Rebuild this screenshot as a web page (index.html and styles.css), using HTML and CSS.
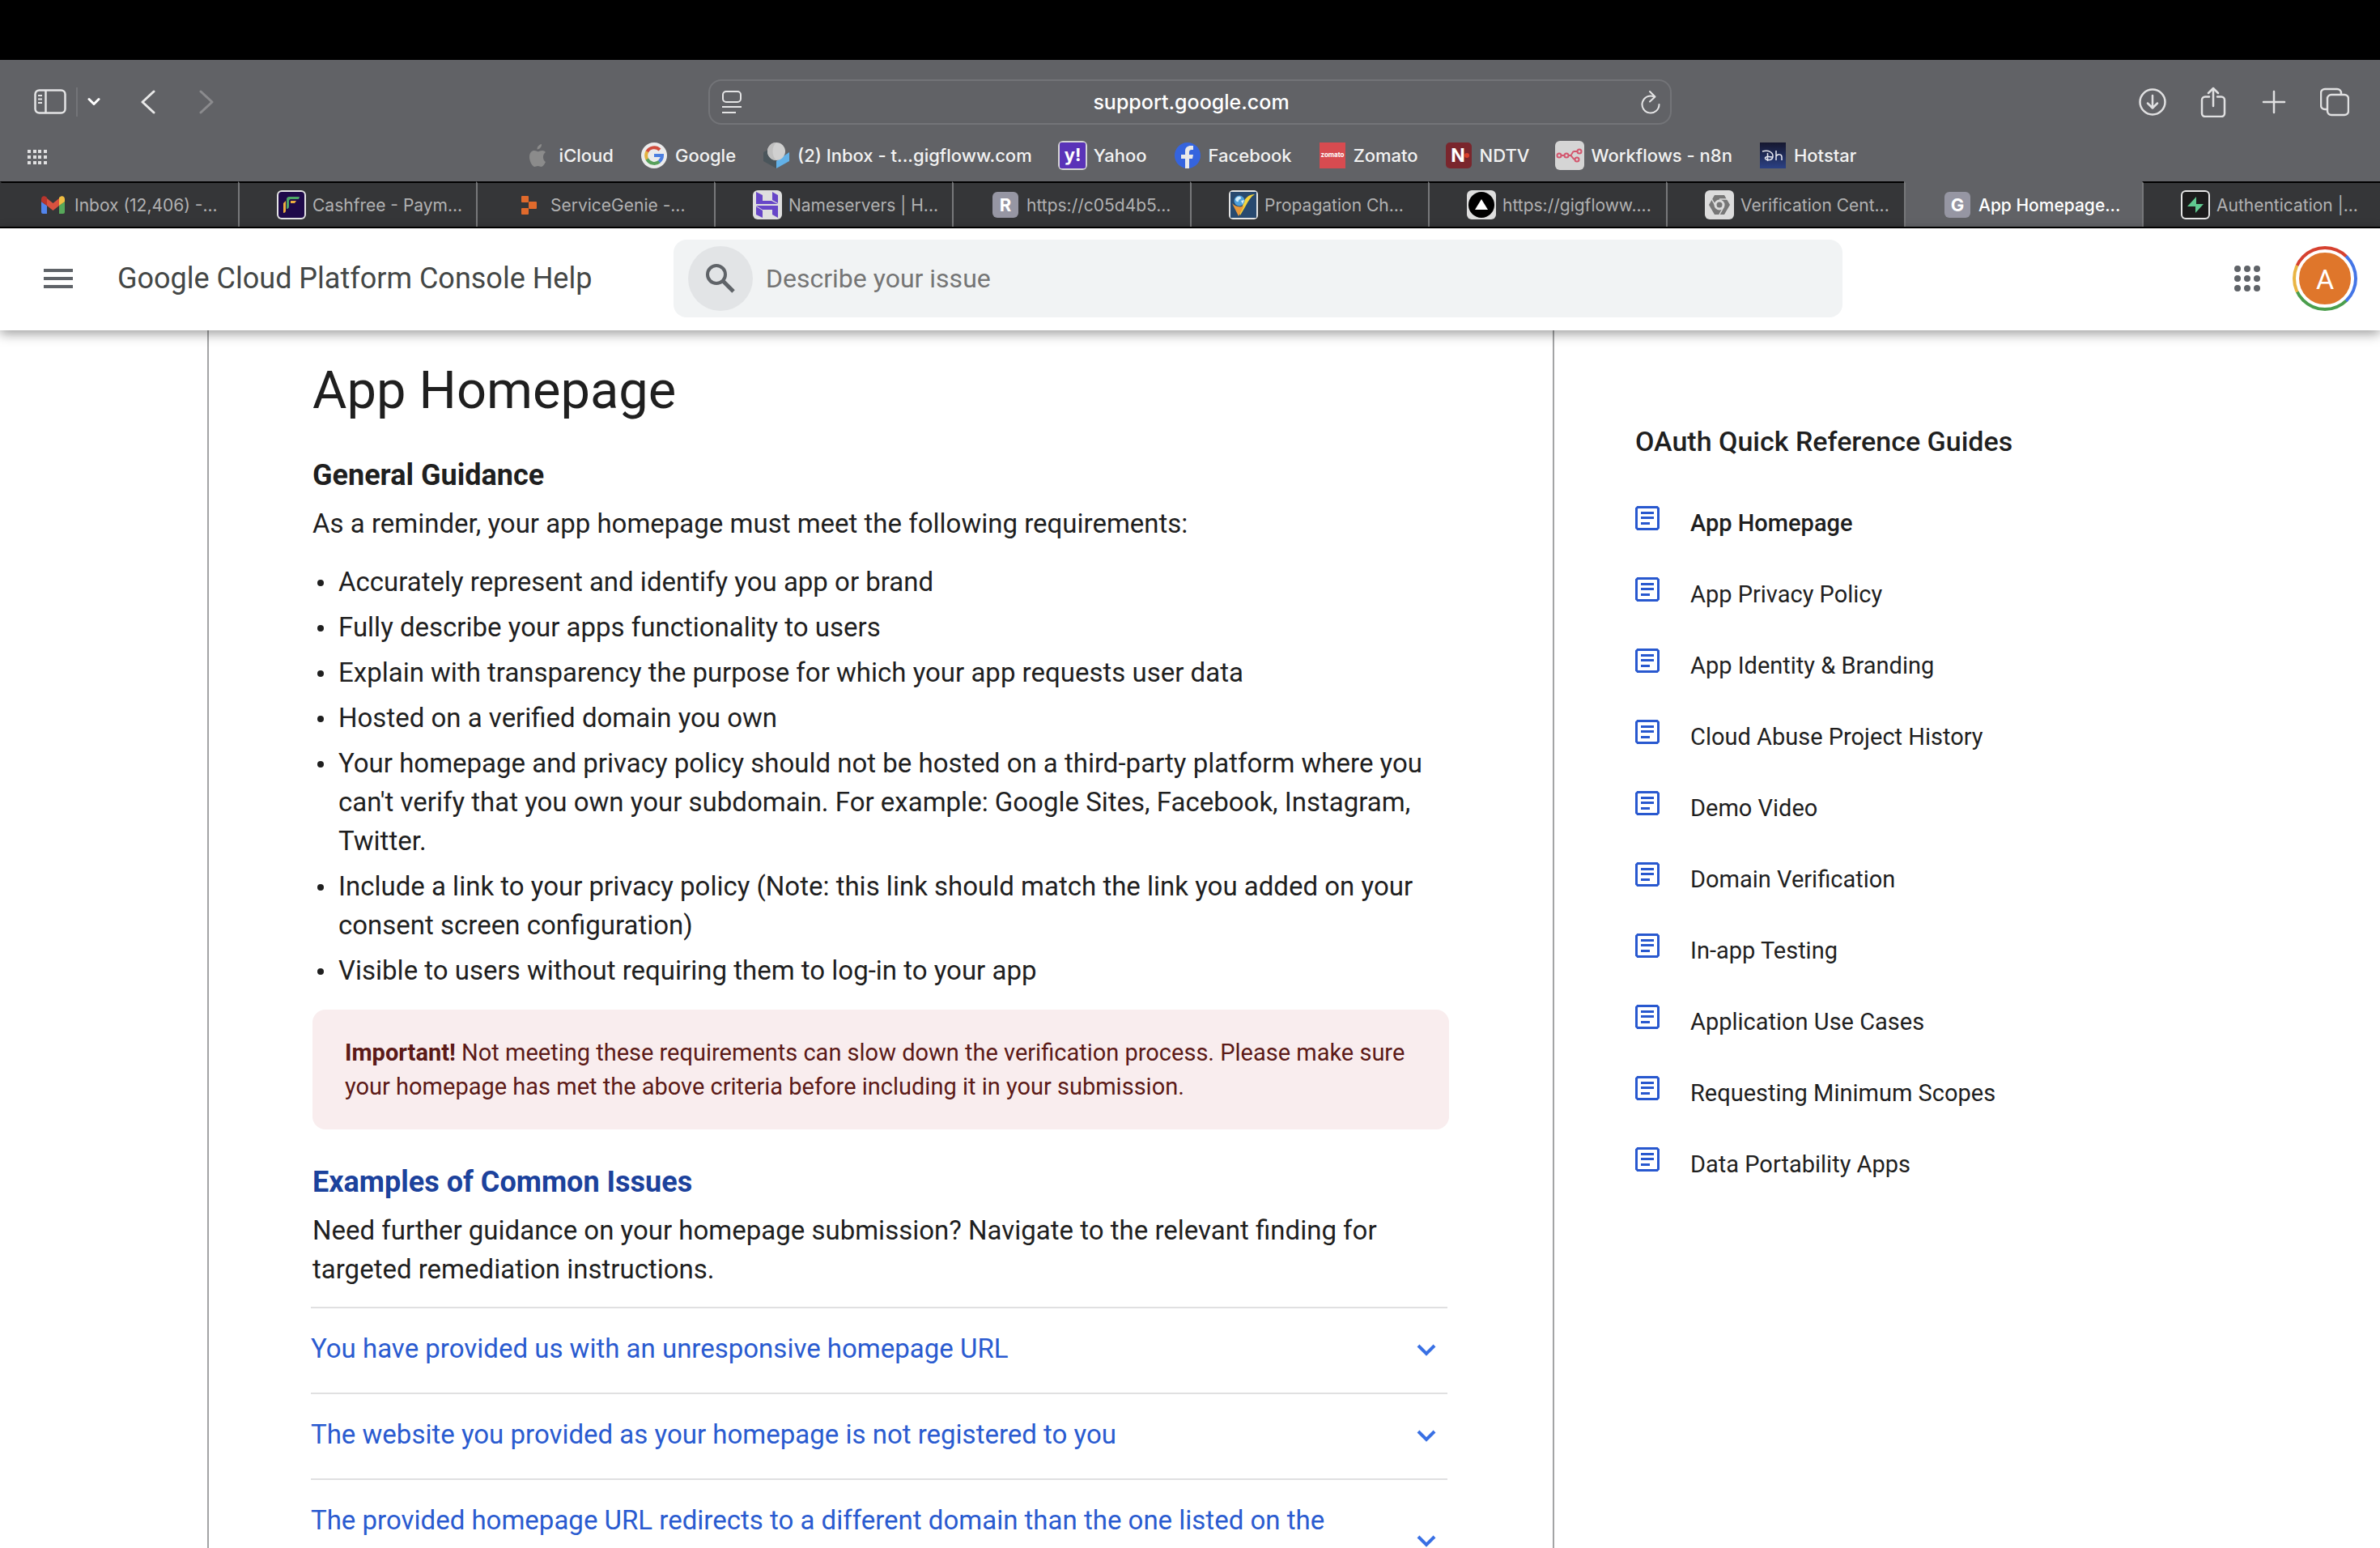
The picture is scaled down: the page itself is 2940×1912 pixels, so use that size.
FILE: index.html
```html
<!DOCTYPE html>
<html lang="en">
<head>
<meta charset="utf-8">
<title>App Homepage - Google Cloud Platform Console Help</title>
<link rel="stylesheet" href="styles.css">
</head>
<body>
<div class="notch-bar"></div>
<div class="browser">
  <div class="toolbar">
    <div class="tool-group tool-left">
      <button class="tool sidebar-btn" aria-label="Show sidebar">
        <svg width="40" height="32" viewBox="0 0 40 32" fill="none" stroke="#e4e4e5" stroke-width="2.500"><rect x="1.500" y="1.500" width="37" height="28" rx="5"/><path d="M14.500 2v27"/><path d="M5 8h5M5 12.500h5M5 17h5" stroke-width="2"/></svg>
      </button>
      <span class="tool-divider"></span>
      <button class="tool menu-btn" aria-label="Tab groups">
        <svg width="16" height="12" viewBox="0 0 16 12" fill="none" stroke="#fff" stroke-width="3" stroke-linecap="round" stroke-linejoin="round"><path d="M2 2.500 8 8.500l6-6"/></svg>
      </button>
      <button class="tool back-btn" aria-label="Back">
        <svg width="18" height="30" viewBox="0 0 18 30" fill="none" stroke="#e8e8e8" stroke-width="3" stroke-linecap="round" stroke-linejoin="round"><path d="M16 2 2 15l14 13"/></svg>
      </button>
      <button class="tool forward-btn" aria-label="Forward" disabled>
        <svg width="18" height="30" viewBox="0 0 18 30" fill="none" stroke="#8b8b8e" stroke-width="3" stroke-linecap="round" stroke-linejoin="round"><path d="m2 2 14 13L2 28"/></svg>
      </button>
    </div>
    <div class="address">
      <button class="tool" aria-label="Page settings">
        <svg width="24" height="30" viewBox="0 0 24 30" fill="none" stroke="#e4e4e5" stroke-width="2"><rect x="1" y="2" width="22" height="13" rx="4"/><path d="M0 21h24M0 28h17"/></svg>
      </button>
      <input class="address-input" type="text" aria-label="Address" value="support.google.com">
      <button class="tool" aria-label="Reload">
        <svg width="24" height="30" viewBox="0 0 24 30" fill="none" stroke="#e4e4e5" stroke-width="2" stroke-linecap="round" stroke-linejoin="round"><path d="M16.500 8.500A10.500 10.500 0 1 0 22.500 18"/><path d="m11 2 6.500 6.500-6.500 6"/></svg>
      </button>
    </div>
    <div class="tool-group tool-right">
      <button class="tool" aria-label="Downloads">
        <svg width="36" height="38" viewBox="0 0 36 38" fill="none" stroke="#e0e0e1" stroke-width="2.500" stroke-linecap="round" stroke-linejoin="round"><circle cx="18" cy="19" r="15.500"/><path d="M18 11v15M12 20.500l6 6 6-6"/></svg>
      </button>
      <button class="tool" aria-label="Share">
        <svg width="36" height="38" viewBox="0 0 36 38" fill="none" stroke="#e0e0e1" stroke-width="2.500" stroke-linecap="round" stroke-linejoin="round"><path d="M13 12.500H8a4 4 0 0 0-4 4V33a4 4 0 0 0 4 4h20a4 4 0 0 0 4-4V16.500a4 4 0 0 0-4-4h-5M18 24V2M12 8l6-6 6 6"/></svg>
      </button>
      <button class="tool" aria-label="New tab">
        <svg width="36" height="38" viewBox="0 0 36 38" fill="none" stroke="#e0e0e1" stroke-width="2.500" stroke-linecap="round"><path d="M18 6v26M5 19h26"/></svg>
      </button>
      <button class="tool" aria-label="Tab overview">
        <svg width="36" height="38" viewBox="0 0 36 38" fill="none" stroke="#e0e0e1" stroke-width="2.500" stroke-linejoin="round"><rect x="9" y="10" width="26" height="25" rx="5"/><path d="M9 28H6a5 5 0 0 1-5-5V8a5 5 0 0 1 5-5h15a5 5 0 0 1 5 5v2"/></svg>
      </button>
    </div>
  </div>

  <nav class="bookmarks" aria-label="Favourites">
    <button class="tool bookmarks-grid" aria-label="All favourites">
      <svg width="24" height="18" viewBox="0 0 24 18" fill="#e0e0e1"><path d="M0 0h4v4H0zM7 0h4v4H7zM13 0h4v4h-4zM20 0h4v4h-4zM0 7h4v4H0zM7 7h4v4H7zM13 7h4v4h-4zM20 7h4v4h-4zM0 14h4v4H0zM7 14h4v4H7zM13 14h4v4h-4zM20 14h4v4h-4z"/></svg>
    </button>
    <a class="bookmark" href="#"><svg class="favicon" viewBox="0 0 36 36"><path fill="#8b8b8b" d="M20 9c-1 1-3 1.600-3.500 1.500C16.500 7 19 4.800 22 4c.2 2-.6 3.800-2 5zM27 26c-1.500 3-3.500 6-5.500 6-1.700 0-2-1-4-1s-2.600 1-4 1c-3 0-6.500-7-6.500-12 0-5.500 3-8 6-8 2 0 3.500 1.200 4.700 1.200S20.500 12 23 12c1.600 0 3 .8 4 2-4.500 3-3.500 10 0 12z"/></svg><span>iCloud</span></a>
    <a class="bookmark" href="#"><svg class="favicon" viewBox="0 0 36 36" fill="none" stroke-width="4"><circle cx="18" cy="18" r="16" fill="#ececec"/><path stroke="#d04b3c" d="M9.300 13.500A10 10 0 0 1 25 11"/><path stroke="#e3b23f" d="M9.400 13.300a10 10 0 0 0 0 9.400"/><path stroke="#57a05b" d="M9.300 22.500A10 10 0 0 0 24.500 25.600"/><path stroke="#4c7fe0" d="M24.300 25.700A10 10 0 0 0 28 18H18"/></svg><span>Google</span></a>
    <a class="bookmark" href="#"><svg class="favicon" viewBox="0 0 36 36"><path fill="#4a555b" d="M2 14l16 11v9L2 25z"/><path fill="#62b1e8" d="M34 14L18 25v9l16-9z"/><path fill="#4a555b" d="M2 14l6-3 10 14z"/><circle cx="18" cy="13" r="11" fill="#d0d0d0"/><path fill="#c0c0c0" d="M18 2a11 11 0 0 0 0 22c-6-5-6-17 0-22z"/></svg><span>(2) Inbox - t...gigfloww.com</span></a>
    <a class="bookmark" href="#"><svg class="favicon" viewBox="0 0 36 36"><rect width="36" height="36" rx="6" fill="#d5d5d5"/><rect x="2" y="2" width="32" height="32" rx="2" fill="#5a33b8"/><text x="18" y="25" text-anchor="middle" class="glyph glyph-yahoo">y!</text></svg><span>Yahoo</span></a>
    <a class="bookmark" href="#"><svg class="favicon" viewBox="0 0 36 36"><circle cx="18" cy="18" r="16" fill="#3564de"/><path fill="#e9e9e9" d="M15 34V22h-5v-5h5v-4c0-5 3-7 7-7h3v5h-2c-2 0-3 1-3 3v3h5l-1 5h-4v12z"/></svg><span>Facebook</span></a>
    <a class="bookmark" href="#"><svg class="favicon" viewBox="0 0 36 36"><path fill="#d74b50" d="M2 2h32v32H2z"/><text x="18" y="20" text-anchor="middle" class="glyph glyph-zomato">zomato</text></svg><span>Zomato</span></a>
    <a class="bookmark" href="#"><svg class="favicon" viewBox="0 0 36 36"><rect x="2" y="2" width="32" height="32" rx="5" fill="#7a262d"/><text x="17" y="26" text-anchor="middle" class="glyph glyph-ndtv">N</text><circle cx="28" cy="18" r="3" fill="#d8402e"/></svg><span>NDTV</span></a>
    <a class="bookmark" href="#"><svg class="favicon" viewBox="0 0 36 36" fill="none" stroke="#d3566e" stroke-width="2"><rect width="36" height="36" rx="6" fill="#d5d5d5" stroke="none"/><circle cx="5" cy="18" r="2.500"/><circle cx="14" cy="18" r="2.500"/><circle cx="30" cy="13" r="2.500"/><circle cx="27" cy="23" r="2.500"/><path d="M7.500 18h4M16.500 18h2c3 0 2-5 5-5h4M18.500 18c3 0 3 5 6 5"/></svg><span>Workflows - n8n</span></a>
    <a class="bookmark" href="#"><svg class="favicon" viewBox="0 0 36 36"><defs><linearGradient id="hs" x2="0" y2="1"><stop stop-color="#15172f"/><stop offset="1" stop-color="#2b4184"/></linearGradient></defs><path fill="url(#hs)" d="M2 2h32v32H2z"/><path d="M5 13c8-2 13 1 13 6s-5 5-8 4-2-5 7-3M11.500 15v10M22 12v12M22 19c2-3 7-3 7 1v4" fill="none" stroke="#e8e8f0" stroke-width="1.500"/></svg><span>Hotstar</span></a>
  </nav>

  <div class="tabs" role="tablist">
    <button class="tab" role="tab"><svg class="favicon" viewBox="0 0 36 36"><path fill="#5285ec" d="M3 14l7 5v10H5a2 2 0 0 1-2-2z"/><path fill="#57a85a" d="M32 14l-7 5v10h5a2 2 0 0 0 2-2z"/><path fill="#d8523f" d="M10 10l7.500 6L25 10v9l-7.500 6L10 19z"/><path fill="#b8352d" d="M3 11c0-4 4-5 7-2v10l-7-5z"/><path fill="#f0bd42" d="M32 11c0-4-4-5-7-2v10l7-5z"/></svg><span>Inbox (12,406) -...</span></button>
    <button class="tab" role="tab"><svg class="favicon" viewBox="0 0 36 36"><rect width="36" height="36" rx="6" fill="#e4e4e4"/><rect x="2" y="2" width="32" height="32" rx="4" fill="#1f0a4a"/><path fill="#4da766" d="M12 23V12c0-3 1-4 4-4h12l-1 3H17c-1 0-2 1-2 2v7c0 2-1 3-3 3z"/><path fill="#ecae3f" d="M8 28V16l3-3v12c0 2-1 3-3 3zM17 16h5l2-3h-7z"/></svg><span>Cashfree - Paym...</span></button>
    <button class="tab" role="tab"><svg class="favicon" viewBox="0 0 36 36" fill="#e06a2c"><rect x="8" y="7" width="9" height="8" rx="1"/><rect x="17" y="14" width="10" height="9" rx="1"/><rect x="8" y="22" width="9" height="8" rx="1"/></svg><span>ServiceGenie -...</span></button>
    <button class="tab" role="tab"><svg class="favicon" viewBox="0 0 36 36"><rect width="36" height="36" rx="6" fill="#dfdfdf"/><path fill="#6746c8" d="M4 2l8 4v7h11l8 4H4zM24 2l7 4v10l-7-4zM31 34l-7-4v-6H12l-8-5h27zM12 34l-8-4v-10l8 5z"/></svg><span>Nameservers | H...</span></button>
    <button class="tab" role="tab"><svg class="favicon" viewBox="0 0 36 36"><rect x="2" y="2" width="32" height="32" rx="6" fill="#9696a3"/><text x="18" y="26" text-anchor="middle" class="glyph glyph-letter">R</text></svg><span>https://c05d4b5...</span></button>
    <button class="tab" role="tab"><svg class="favicon" viewBox="0 0 36 36"><rect width="36" height="36" rx="5" fill="#e4e4e4"/><path fill="#28496f" d="M2 2h32v32H2z"/><path fill="#f3d33c" d="M13 28l4-9c2-9 7-14 15-14-5 3-8 8-11 14l-7 12z"/><path fill="#e8983a" d="M4 16c4 4 10 6 15 3l-7 13z"/><circle cx="13" cy="13" r="6.500" fill="#4d9fdb"/><path fill="#d4ecf8" d="M8 11c2-4 6-4 7-2s-3 2-3 4-3 2-4-2zM15 13l4-1-2 5z"/></svg><span>Propagation Ch...</span></button>
    <button class="tab" role="tab"><svg class="favicon" viewBox="0 0 36 36"><rect width="36" height="36" rx="6" fill="#dedede"/><circle cx="18" cy="18" r="16"/><path fill="#fff" d="M18 11l8 13H10z"/></svg><span>https://gigfloww....</span></button>
    <button class="tab" role="tab"><svg class="favicon" viewBox="0 0 36 36"><rect width="36" height="36" rx="6" fill="#dcdcdc"/><path fill="#777" fill-rule="evenodd" d="M12 6h12l7 12-7 12H12L5 18zM18 11.500a6.500 6.500 0 1 0 0 13 6.500 6.500 0 1 0 0-13z"/><circle cx="18" cy="18" r="3.500" fill="#777"/><path d="M8 10l5 9M18 11h11M18 30l5-9" stroke="#dcdcdc" stroke-width="1.500"/></svg><span>Verification Cent...</span></button>
    <button class="tab tab-active" role="tab" aria-selected="true"><svg class="favicon" viewBox="0 0 36 36"><rect x="2" y="2" width="32" height="32" rx="6" fill="#9696a3"/><text x="18" y="26" text-anchor="middle" class="glyph glyph-letter">G</text></svg><span>App Homepage...</span></button>
    <button class="tab" role="tab"><svg class="favicon" viewBox="0 0 36 36"><rect width="36" height="36" rx="6" fill="#e4e4e4"/><rect x="2" y="2" width="32" height="32" rx="4" fill="#1c1c1c"/><path fill="#5fca8f" d="M19 8v9h9L18 28v-8H8z"/></svg><span>Authentication |...</span></button>
  </div>
</div>

<header class="help-header">
  <button class="icon-btn" aria-label="Main menu">
    <svg width="36" height="24" viewBox="0 0 36 24" fill="#5f6368"><path d="M0 0h36v4H0zM0 10h36v4H0zM0 20h36v4H0z"/></svg>
  </button>
  <a class="help-title" href="#">Google Cloud Platform Console Help</a>
  <form class="search" role="search">
    <button class="search-btn" type="button" aria-label="Search">
      <svg width="36" height="36" viewBox="0 0 36 36" fill="none" stroke="#5f6368" stroke-width="4"><circle cx="13" cy="13" r="11"/><path d="M21 21l13 13" stroke-width="5"/></svg>
    </button>
    <input class="search-input" type="text" placeholder="Describe your issue" aria-label="Describe your issue">
  </form>
  <button class="icon-btn apps-btn" aria-label="Google apps">
    <svg width="32" height="32" viewBox="0 0 32 32" fill="#5f6368"><circle cx="4" cy="4" r="4"/><circle cx="16" cy="4" r="4"/><circle cx="28" cy="4" r="4"/><circle cx="4" cy="16" r="4"/><circle cx="16" cy="16" r="4"/><circle cx="28" cy="16" r="4"/><circle cx="4" cy="28" r="4"/><circle cx="16" cy="28" r="4"/><circle cx="28" cy="28" r="4"/></svg>
  </button>
  <button class="avatar" aria-label="Google Account"><span class="avatar-letter">A</span></button>
</header>

<div class="page">
  <main class="article">
    <h1 class="article-title">App Homepage</h1>
    <h2 class="section-title">General Guidance</h2>
    <p class="text">As a reminder, your app homepage must meet the following requirements:</p>
    <ul class="requirements">
      <li><span>Accurately represent and identify you app or brand</span></li>
      <li><span>Fully describe your apps functionality to users</span></li>
      <li><span>Explain with transparency the purpose for which your app requests user data</span></li>
      <li><span>Hosted on a verified domain you own</span></li>
      <li><span>Your homepage and privacy policy should not be hosted on a third-party platform where you can't verify that you own your subdomain. For example: Google Sites, Facebook, Instagram, Twitter.</span></li>
      <li><span>Include a link to your privacy policy (Note: this link should match the link you added on your consent screen configuration)</span></li>
      <li><span>Visible to users without requiring them to log-in to your app</span></li>
    </ul>
    <p class="alert"><strong>Important!</strong> Not meeting these requirements can slow down the verification process. Please make sure your homepage has met the above criteria before including it in your submission.</p>
    <h2 class="section-title section-title-blue">Examples of Common Issues</h2>
    <p class="text">Need further guidance on your homepage submission? Navigate to the relevant finding for targeted remediation instructions.</p>
    <div class="issues">
      <button class="issue"><span>You have provided us with an unresponsive homepage URL</span><svg width="24" height="20" viewBox="0 0 24 20" fill="none" stroke="#3970e4" stroke-width="4"><path d="M2 6l10 10L22 6"/></svg></button>
      <button class="issue"><span>The website you provided as your homepage is not registered to you</span><svg width="24" height="20" viewBox="0 0 24 20" fill="none" stroke="#3970e4" stroke-width="4"><path d="M2 6l10 10L22 6"/></svg></button>
      <button class="issue"><span>The provided homepage URL redirects to a different domain than the one listed on the OAuth consent screen</span><svg width="24" height="20" viewBox="0 0 24 20" fill="none" stroke="#3970e4" stroke-width="4"><path d="M2 6l10 10L22 6"/></svg></button>
    </div>
  </main>
  <aside class="guides">
    <svg class="symbols" width="0" height="0" aria-hidden="true"><symbol id="doc" viewBox="0 0 30 30"><path fill="none" stroke="#2858cf" stroke-width="3" d="M3 1.500h24L28.500 3v24L27 28.500H3L1.500 27V3z"/><path fill="#2858cf" d="M7 7h16v3H7zM7 13h16v3H7zM7 20h11v3H7z"/></symbol></svg>
    <h2 class="guides-title">OAuth Quick Reference Guides</h2>
    <nav class="guides-list">
      <a class="guide guide-current" href="#"><svg class="guide-icon"><use href="#doc"/></svg><span>App Homepage</span></a>
      <a class="guide" href="#"><svg class="guide-icon"><use href="#doc"/></svg><span>App Privacy Policy</span></a>
      <a class="guide" href="#"><svg class="guide-icon"><use href="#doc"/></svg><span>App Identity &amp; Branding</span></a>
      <a class="guide" href="#"><svg class="guide-icon"><use href="#doc"/></svg><span>Cloud Abuse Project History</span></a>
      <a class="guide" href="#"><svg class="guide-icon"><use href="#doc"/></svg><span>Demo Video</span></a>
      <a class="guide" href="#"><svg class="guide-icon"><use href="#doc"/></svg><span>Domain Verification</span></a>
      <a class="guide" href="#"><svg class="guide-icon"><use href="#doc"/></svg><span>In-app Testing</span></a>
      <a class="guide" href="#"><svg class="guide-icon"><use href="#doc"/></svg><span>Application Use Cases</span></a>
      <a class="guide" href="#"><svg class="guide-icon"><use href="#doc"/></svg><span>Requesting Minimum Scopes</span></a>
      <a class="guide" href="#"><svg class="guide-icon"><use href="#doc"/></svg><span>Data Portability Apps</span></a>
    </nav>
  </aside>
</div>
</body>
</html>
```

FILE: styles.css
```css
* { box-sizing: border-box; }

body {
  margin: 0;
  height: 100vh;
  overflow: hidden;
  display: flex;
  flex-direction: column;
  background: #fff;
  color: #1f1f1f;
  font-family: Roboto, "Liberation Sans", sans-serif;
}

button {
  margin: 0;
  padding: 0;
  border: 0;
  background: none;
  font: inherit;
  color: inherit;
}

input {
  border: 0;
  background: none;
  font: inherit;
  outline: none;
  min-width: 0;
}

a { color: inherit; text-decoration: none; }
h1, h2, p, ul { margin: 0; padding: 0; }
svg { display: block; flex: none; }

/* Browser window */
.notch-bar { flex: none; height: 74px; background: #000; }

.browser {
  flex: none;
  background: #616266;
  color: #f2f2f2;
  font-family: Inter, "Liberation Sans", sans-serif;
  font-size: 22px;
}

.toolbar {
  display: grid;
  grid-template-columns: 1fr 1190px 1fr;
  align-items: center;
  height: 104px;
}

.tool { display: flex; align-items: center; }
.tool-group { display: flex; align-items: center; }
.tool-left { padding-left: 42px; }
.tool-divider { width: 2px; height: 36px; margin: 0 12px; background: #737478; }
.back-btn { margin-left: 50px; }
.forward-btn { margin-left: 54px; }
.tool-right { justify-content: flex-end; gap: 39px; padding-right: 38px; }

.address {
  display: flex;
  align-items: center;
  height: 56px;
  padding: 0 12px 0 15px;
  border: 2px solid #737478;
  border-radius: 16px;
}

.address-input {
  flex: 1;
  color: #fff;
  font-size: 25px;
  font-weight: 500;
  text-align: center;
}

.bookmarks {
  display: grid;
  grid-template-columns: 1fr repeat(9, auto) 1fr;
  align-items: center;
  column-gap: 32px;
  height: 46px;
  padding-bottom: 16px;
}

.bookmarks-grid { padding-left: 34px; }
.bookmark { display: flex; align-items: center; gap: 8px; margin-top: -4px; font-weight: 500; white-space: nowrap; }
.favicon { width: 36px; height: 36px; }

.glyph { font-family: Inter, sans-serif; font-weight: 700; fill: #fff; }
.glyph-yahoo { font-size: 22px; }
.glyph-zomato { font-size: 8px; }
.glyph-ndtv { font-size: 23px; }
.glyph-letter { font-size: 22px; }

.tabs {
  display: flex;
  height: 58px;
  background: #353638;
  border-bottom: 2px solid #000;
}

.tab {
  flex: 1 1 0;
  min-width: 0;
  display: flex;
  align-items: center;
  gap: 8px;
  padding-left: 46px;
  border-top: 2px solid #000;
  border-left: 2px solid #77787a;
  color: #b1b1b2;
  font-size: 21px;
  white-space: nowrap;
}

.tab:first-child { border-left-color: transparent; }
.tab-active { background: #616266; border-top-color: #616266; color: #fff; font-weight: 500; }

/* Help centre header */
.help-header {
  flex: none;
  position: relative;
  z-index: 1;
  display: flex;
  align-items: center;
  height: 126px;
  padding: 0 28px 2px 54px;
  background: #fff;
  box-shadow: 0 4px 14px rgba(0, 0, 0, 0.4);
}

.help-title { flex: 0 0 687px; margin-left: 55px; color: #444746; font-size: 36px; }

.search {
  flex: 0 1 1444px;
  display: flex;
  align-items: center;
  height: 96px;
  padding-left: 18px;
  border-radius: 16px;
  background: #f1f3f4;
}

.search-btn {
  display: flex;
  align-items: center;
  justify-content: center;
  width: 80px;
  height: 80px;
  border-radius: 50%;
  background: #e2e4e6;
}

.search-input { flex: 1; padding: 0 16px; font-size: 32px; color: #1f1f1f; }
.search-input::placeholder { color: #757575; opacity: 1; }

.apps-btn { margin-left: auto; }

.avatar {
  width: 80px;
  height: 80px;
  margin-left: 40px;
  padding: 4px;
  border-radius: 50%;
  background: conic-gradient(#d6412f 0 43deg, #4475e6 43deg 137deg, #4a9e4c 137deg 244deg, #e9b443 244deg 295deg, #d6412f 295deg);
}

.avatar-letter {
  display: block;
  height: 72px;
  border: 4px solid #fff;
  border-radius: 50%;
  background: #df762b;
  color: #fff;
  font-size: 34px;
  line-height: 66px;
}

/* Page body */
.page {
  flex: 1;
  min-height: 0;
  display: grid;
  grid-template-columns: 1664fr 1020fr;
  padding-left: 256px;
}

.article {
  padding: 34px 128px 0;
  border: solid #a3a4a5;
  border-width: 0 2px;
}

.article-title { font-size: 65px; font-weight: 400; line-height: 80px; }

.section-title { margin: 41px 0 12px; font-size: 36px; font-weight: 700; line-height: 48px; }
.section-title-blue { color: #1c429c; }

.text, .requirements, .issue { font-size: 33px; line-height: 48px; }

.requirements {
  display: flex;
  flex-direction: column;
  gap: 8px;
  margin: 24px 0;
  list-style: none;
}

.requirements li { display: flex; }

.requirements li::before {
  content: "";
  flex: none;
  width: 8px;
  height: 8px;
  margin: 21px 18px 0 6px;
  border-radius: 50%;
  background: #1f1f1f;
}

.alert {
  padding: 32px 40px;
  border-radius: 16px;
  background: #f9edee;
  color: #5c1a17;
  font-size: 29px;
  line-height: 42px;
}

.issues { margin: 22px 2px 0 -2px; }

.issue {
  display: flex;
  align-items: center;
  justify-content: space-between;
  width: 100%;
  padding: 26px 14px 30px 0;
  border-top: 2px solid #e0e0e1;
  color: #2a5bd0;
  text-align: left;
}

.issue span { max-width: 1290px; }

.guides { padding: 113px 100px 0; }
.symbols { position: absolute; }
.guides-title { font-size: 34px; font-weight: 500; line-height: 48px; }
.guides-list { display: flex; flex-direction: column; gap: 40px; margin-top: 53px; }
.guide { display: flex; gap: 38px; font-size: 29px; line-height: 48px; }
.guide-icon { width: 30px; height: 30px; margin-top: 3px; }
.guide-current { font-weight: 500; }
```
